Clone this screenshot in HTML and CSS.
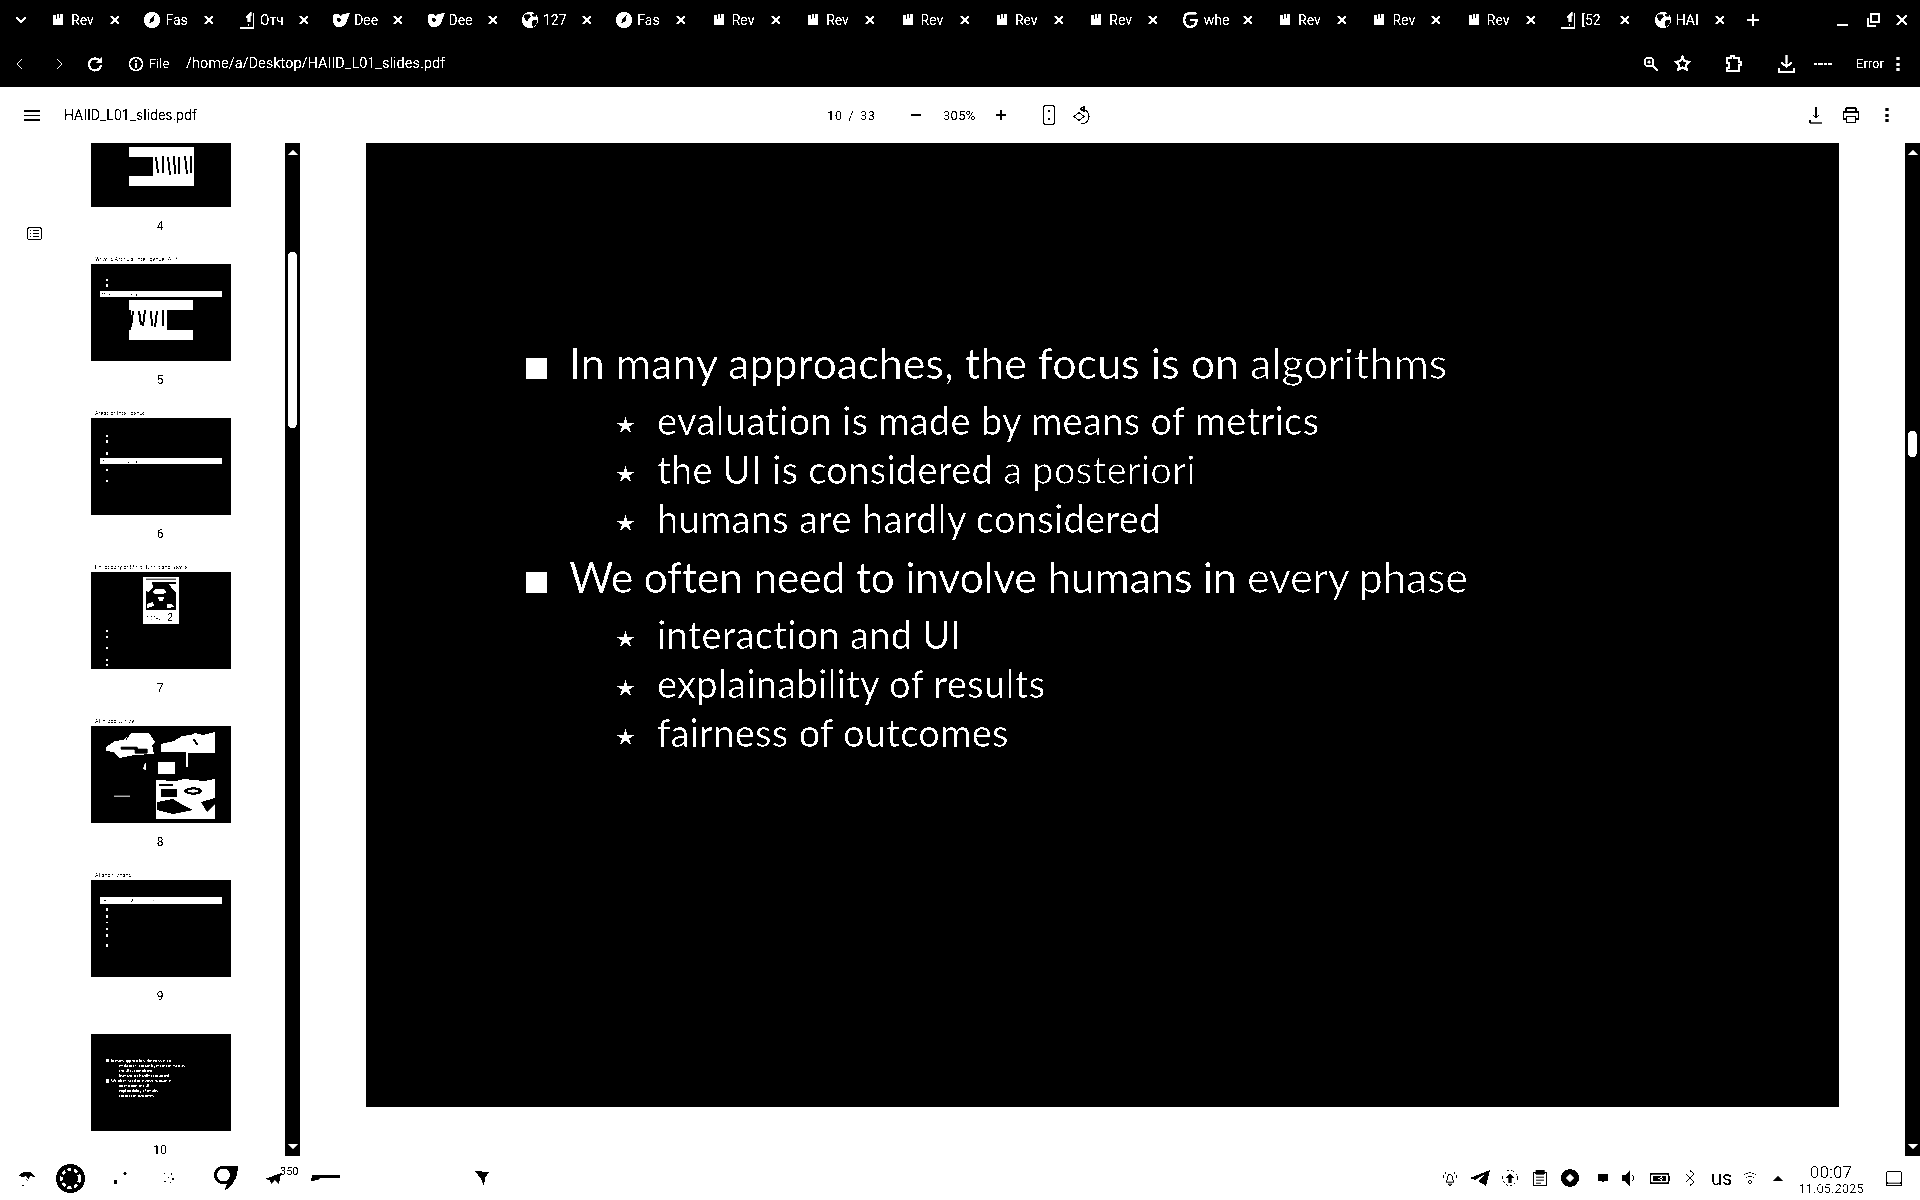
FILE: index.html
```html
<!DOCTYPE html>
<html lang="en">
<head>
    <meta charset="UTF-8">
    <meta name="viewport" content="width=device-width, initial-scale=1.0">
    <title>HAIID_L01_slides.pdf</title>
    <link rel="stylesheet" href="styles.css">
</head>
<body>
<svg class="defs" width="0" height="0">
    <symbol id="i-close" viewBox="0 0 10 10"><path d="M1 1l8 8M9 1l-8 8" stroke="#fff" stroke-width="2.4"/></symbol>
    <symbol id="i-rev" viewBox="-5 -4 22 22"><path d="M0 1h4l1-1h7v13H0z" fill="#fff"/><path d="M3 1h2v5H3zM7 0h1v5H7z" fill="#000"/></symbol>
    <symbol id="i-fast" viewBox="-1 -1 20 20"><circle cx="9" cy="9" r="9" fill="#fff"/><path d="M12 3L7 8l-1 5 5-3z" fill="#000"/></symbol>
    <symbol id="i-doc" viewBox="0 0 15 18"><path d="M0 17h14V2" stroke="#fff" stroke-width="1.3" fill="none"/><path d="M7 5l4-4h1v4h-1v6H8V7H6z" fill="#fff"/><path d="M9 13v2" stroke="#fff"/></symbol>
    <symbol id="i-deep" viewBox="0 0 18 14"><path d="M1 2c3-2 6-1 8 1l2-2 7-1-3 7c-1 4-3 7-7 7H6C2 14 0 7 1 2z" fill="#fff"/><path d="M5 5c2-1 4 1 4 2s-2 3-3 2-2-3-1-4z" fill="#000"/></symbol>
    <symbol id="i-globe" viewBox="-1 -1 20 20"><circle cx="9" cy="9" r="9" fill="#fff"/><path d="M3 3h6l1 3-3 2v3L4 9 2 6zM12 9h5l-1 5-4 3-1-5zM11 2h4l1 3h-4z" fill="#000"/></symbol>
    <symbol id="i-g" viewBox="0 0 16 16"><path d="M13 2H6C3 2 2 5 2 8s1 6 5 6 6-2 6-6H7" stroke="#fff" stroke-width="2" fill="none"/></symbol>
    <symbol id="i-tg" viewBox="0 0 20 16"><path d="M20 0L0 8l5 2 10-6-7 7 8 5z" fill="#000"/></symbol>
    <symbol id="i-star" viewBox="0 0 19 17"><path d="M9.500 0l1.800 7 7.700-.1-6.200 3.700 2.500 6.400-5.800-4.200L3.700 17l2.500-6.400L0 6.900 7.700 7z" fill="#fff"/></symbol>
</svg>

<div class="screen">
    <header class="chrome">
        <div class="tabstrip">
            <svg class="tab-menu" width="12" height="8" viewBox="0 0 12 8"><path d="M1 1l5 5 5-5" stroke="#fff" stroke-width="2" fill="none"/></svg>
            <div class="tab"><svg class="fav"><use href="#i-rev"/></svg><span class="tab-label">Rev</span><svg class="tab-x"><use href="#i-close"/></svg></div>
            <div class="tab"><svg class="fav"><use href="#i-fast"/></svg><span class="tab-label">Fas</span><svg class="tab-x"><use href="#i-close"/></svg></div>
            <div class="tab"><svg class="fav"><use href="#i-doc"/></svg><span class="tab-label">Отч</span><svg class="tab-x"><use href="#i-close"/></svg></div>
            <div class="tab"><svg class="fav"><use href="#i-deep"/></svg><span class="tab-label">Dee</span><svg class="tab-x"><use href="#i-close"/></svg></div>
            <div class="tab"><svg class="fav"><use href="#i-deep"/></svg><span class="tab-label">Dee</span><svg class="tab-x"><use href="#i-close"/></svg></div>
            <div class="tab"><svg class="fav"><use href="#i-globe"/></svg><span class="tab-label">127</span><svg class="tab-x"><use href="#i-close"/></svg></div>
            <div class="tab"><svg class="fav"><use href="#i-fast"/></svg><span class="tab-label">Fas</span><svg class="tab-x"><use href="#i-close"/></svg></div>
            <div class="tab"><svg class="fav"><use href="#i-rev"/></svg><span class="tab-label">Rev</span><svg class="tab-x"><use href="#i-close"/></svg></div>
            <div class="tab"><svg class="fav"><use href="#i-rev"/></svg><span class="tab-label">Rev</span><svg class="tab-x"><use href="#i-close"/></svg></div>
            <div class="tab"><svg class="fav"><use href="#i-rev"/></svg><span class="tab-label">Rev</span><svg class="tab-x"><use href="#i-close"/></svg></div>
            <div class="tab"><svg class="fav"><use href="#i-rev"/></svg><span class="tab-label">Rev</span><svg class="tab-x"><use href="#i-close"/></svg></div>
            <div class="tab"><svg class="fav"><use href="#i-rev"/></svg><span class="tab-label">Rev</span><svg class="tab-x"><use href="#i-close"/></svg></div>
            <div class="tab"><svg class="fav"><use href="#i-g"/></svg><span class="tab-label">whe</span><svg class="tab-x"><use href="#i-close"/></svg></div>
            <div class="tab"><svg class="fav"><use href="#i-rev"/></svg><span class="tab-label">Rev</span><svg class="tab-x"><use href="#i-close"/></svg></div>
            <div class="tab"><svg class="fav"><use href="#i-rev"/></svg><span class="tab-label">Rev</span><svg class="tab-x"><use href="#i-close"/></svg></div>
            <div class="tab"><svg class="fav"><use href="#i-rev"/></svg><span class="tab-label">Rev</span><svg class="tab-x"><use href="#i-close"/></svg></div>
            <div class="tab"><svg class="fav"><use href="#i-doc"/></svg><span class="tab-label">[52</span><svg class="tab-x"><use href="#i-close"/></svg></div>
            <div class="tab"><svg class="fav"><use href="#i-globe"/></svg><span class="tab-label">HAI</span><svg class="tab-x"><use href="#i-close"/></svg></div>
            <svg class="tab-new" width="14" height="14" viewBox="0 0 14 14"><path d="M7 1v12M1 7h12" stroke="#fff" stroke-width="2.4"/></svg>
            <div class="winbtns">
                <svg width="14" height="14" viewBox="0 0 14 14"><path d="M1 12h11" stroke="#fff" stroke-width="2.4"/></svg>
                <svg width="14" height="14" viewBox="0 0 14 14"><path d="M5 1h8v8H5z" fill="none" stroke="#fff" stroke-width="2.4"/><path d="M2 5v8h8" fill="none" stroke="#fff" stroke-width="1.6"/></svg>
                <svg width="14" height="14" viewBox="0 0 14 14"><path d="M2 2l10 10M12 2L2 12" stroke="#fff" stroke-width="2.4"/></svg>
            </div>
        </div>
        <div class="addrbar">
            <svg width="8" height="12" viewBox="0 0 8 12"><path d="M7 1L2 6l5 5" stroke="#fff" stroke-width="1.2" fill="none"/></svg>
            <svg width="8" height="12" viewBox="0 0 8 12"><path d="M1 1l5 5-5 5" stroke="#fff" stroke-width="1.2" fill="none"/></svg>
            <svg width="16" height="16" viewBox="0 0 16 16"><path d="M13 5a6 6 0 1 0 1 4" stroke="#fff" stroke-width="2.2" fill="none"/><path d="M15 1v6H9z" fill="#fff"/></svg>
            <svg width="16" height="16" viewBox="0 0 16 16"><circle cx="8" cy="8" r="6.500" stroke="#fff" stroke-width="1.500" fill="none"/><path d="M8 7v5M8 4v2" stroke="#fff" stroke-width="2"/></svg>
            <span class="addr-file">File</span>
            <span class="addr-url">/home/a/Desktop/HAIID_L01_slides.pdf</span>
            <div class="addr-tools">
                <svg width="16" height="16" viewBox="0 0 16 16"><circle cx="6" cy="6" r="4.500" stroke="#fff" stroke-width="2" fill="none"/><path d="M9 9l6 6" stroke="#fff" stroke-width="1.600"/><path d="M4 6h4M6 4v4" stroke="#fff"/></svg>
                <svg width="17" height="17" viewBox="0 0 17 17"><path d="M8.500 1.500l2 4.700 5 .4-3.800 3.300 1.200 5-4.400-2.700-4.400 2.700 1.200-5L1.500 6.600l5-.4z" fill="none" stroke="#fff" stroke-width="2"/></svg>
                <svg width="18" height="18" viewBox="0 0 18 18"><path d="M3 3h4V1h3v2h5v4h2v3h-2v6H3v-3h2V8H3z" fill="none" stroke="#fff" stroke-width="2"/></svg>
                <svg width="17" height="18" viewBox="0 0 17 18"><path d="M8.500 0v11M3 7l5.500 5L14 7M1 13v4h15v-4" fill="none" stroke="#fff" stroke-width="2"/></svg>
                <svg width="18" height="6" viewBox="0 0 18 6"><path d="M0 3h18" stroke="#fff" stroke-width="2" stroke-dasharray="3 1 5 1"/></svg>
                <span class="addr-error">Error</span>
                <svg width="4" height="16" viewBox="0 0 4 16"><path d="M2 1v3M2 7v3M2 12v3" stroke="#fff" stroke-width="3"/></svg>
            </div>
        </div>
    </header>

    <div class="pdfbar">
        <svg width="16" height="11" viewBox="0 0 16 11"><path d="M0 1h16M0 5.500h16M0 10h16" stroke="#000" stroke-width="1.600"/></svg>
        <span class="pdf-title">HAIID_L01_slides.pdf</span>
        <span class="pdf-pages">10 <i>/</i> 33</span>
        <svg width="12" height="12" viewBox="0 0 12 12"><path d="M1 6h10" stroke="#000" stroke-width="2.200"/></svg>
        <span class="pdf-zoom">305%</span>
        <svg width="12" height="12" viewBox="0 0 12 12"><path d="M1 6h10M6 1v10" stroke="#000" stroke-width="2.200"/></svg>
        <svg width="12" height="20" viewBox="0 0 12 20"><rect x=".8" y=".8" width="10.400" height="18.400" rx="1" fill="none" stroke="#000" stroke-width="1.100"/><path d="M6 5v2M6 13v2" stroke="#000" stroke-width="1.200"/></svg>
        <svg width="18" height="19" viewBox="0 0 18 19"><path d="M9 3a7.500 7.500 0 1 1-1 15" fill="none" stroke="#000" stroke-width="1.200"/><path d="M7 3l4-2.500v5zM1 10.500l5-4 5 4-5 4z" fill="none" stroke="#000" stroke-width="1.100"/></svg>
        <svg width="16" height="17" viewBox="0 0 16 17"><path d="M8 0v11M5 8l3 3 3-3" fill="none" stroke="#000" stroke-width="1.200"/><path d="M2 13v3h12" fill="none" stroke="#000" stroke-width="1.100"/></svg>
        <svg width="18" height="18" viewBox="0 0 18 18"><path d="M4 5V2h10v3M4 13H1.500V6h15v7H14M4.500 10.500h9v6h-9z" fill="none" stroke="#000" stroke-width="1.300"/></svg>
        <svg width="4" height="16" viewBox="0 0 4 16"><path d="M2 1v3M2 7v3M2 12v3" stroke="#000" stroke-width="3"/></svg>
    </div>

    <main class="viewer">
        <aside class="rail">
            <svg width="15" height="13" viewBox="0 0 15 13"><rect x=".6" y=".6" width="13.800" height="11.800" rx="1.500" fill="none" stroke="#000" stroke-width="1.100"/><path d="M3 3.500h1M6 3.500h6M3 6.500h1M6 6.500h6M3 9.500h1M6 9.500h6" stroke="#000" stroke-width="1.100"/></svg>
        </aside>

        <section class="thumbs">
            <div class="thumb thumb-first">
                <svg class="page" viewBox="0 0 140 97">
                    <path d="M38 37h65v39H38V66h24V47H38z" fill="#fff"/>
                    <path d="M65 47l2 16M72 46v17M77 47l2 18M83 46l1 18M88 47v17M94 46l2 18M100 46v17" stroke="#000" stroke-width="2"/>
                </svg>
                <span class="thumb-no">4</span>
            </div>
            <div class="thumb">
                <span class="thumb-title">What is Artificial Intelligence (AI)?</span>
                <svg class="page" viewBox="0 0 140 97">
                    <path d="M16 15v2M16 20v3" stroke="#fff" stroke-width="2"/>
                    <rect x="9" y="27" width="122" height="6" fill="#fff"/>
                    <text class="bar-text" x="11" y="31.500">Machine learning models</text>
                    <path d="M38 36h64v10H76v20h26v10H38V66h2V46h-2z" fill="#fff"/>
                    <path d="M42 47l-2 16M48 47l2 14M54 46l-2 16M60 47l1 15M66 47l-2 16M72 46v16" stroke="#000" stroke-width="2"/>
                </svg>
                <span class="thumb-no">5</span>
            </div>
            <div class="thumb">
                <span class="thumb-title">Areas of Intelligence</span>
                <svg class="page" viewBox="0 0 140 97">
                    <path d="M16 17v2M16 22v3M16 34v3M16 51v2M16 62v2" stroke="#fff" stroke-width="2"/>
                    <rect x="9" y="40" width="122" height="6" fill="#fff"/>
                    <text class="bar-text" x="12" y="44.500">Natural language and vision</text>
                </svg>
                <span class="thumb-no">6</span>
            </div>
            <div class="thumb">
                <span class="thumb-title">Philosophy of Mind: Turing and Searle</span>
                <svg class="page" viewBox="0 0 140 97">
                    <rect x="52" y="5" width="36" height="47" fill="#fff"/>
                    <path d="M55 10h30v28H55z" fill="#000"/>
                    <path d="M55 10h6l1 5-4 5-3-1zM78 12h7v8l-3-2zM64 17h9l3 3-4 2-8 0-2-2zM67 25h6l-1 4h-4zM56 32l6-2 1 4-7 2zM76 32h5l3 3-8 1z" fill="#fff"/>
                    <path d="M55 7h30" stroke="#000"/>
                    <text class="poster-text" x="55" y="48">TOTAL</text>
                    <text class="poster-no" x="76" y="49">2</text>
                    <path d="M16 58v2M16 64v2M16 75v2M16 87v2M16 92v2" stroke="#fff" stroke-width="2"/>
                </svg>
                <span class="thumb-no">7</span>
            </div>
            <div class="thumb">
                <span class="thumb-title">AI in pop culture</span>
                <svg class="page" viewBox="0 0 140 97">
                    <path d="M15 21l9-6 8-1 9-7h17l6 9-3 3 2 9-20 1-14 3-6-6-8-1z" fill="#fff"/>
                    <path d="M30 21h16v2H30zM44 23h12v4H44zM38 9l-3 5" stroke="#000" fill="#000"/>
                    <path d="M70 26V18l13-3 8-5 9-1 4-2 8 2 12-3v21H97v14h-2V26z" fill="#fff"/>
                    <path d="M102 13l5 6" stroke="#000" stroke-width="2"/>
                    <rect x="67" y="36" width="17" height="12" fill="#fff"/>
                    <path d="M52 43l2-6h1v7z" fill="#fff"/>
                    <path d="M23 70h16" stroke="#fff"/>
                    <path d="M65 54l20 1 8-2 20 2 11-2v40H65z" fill="#fff"/>
                    <path d="M68 58h14v2H68zM70 63h16v8H70zM92 65c6-5 16-5 20 0-4 5-14 5-20 0zM96 55v6M66 76l16-3 10 6 10 5-20 4-16-4zM110 76l14-4v6l-8 8z" fill="#000"/>
                    <path d="M96 65c4-2 10-2 12 0-3 2-9 2-12 0z" fill="#fff"/>
                </svg>
                <span class="thumb-no">8</span>
            </div>
            <div class="thumb">
                <span class="thumb-title">AI and humans</span>
                <svg class="page" viewBox="0 0 140 97">
                    <rect x="9" y="17" width="122" height="7" fill="#fff"/>
                    <text class="bar-text" x="13" y="22">Human centered AI is a new idea</text>
                    <path d="M16 28v3M16 35v3M16 42v1M16 48v2M16 54v3M16 64v3" stroke="#fff" stroke-width="2"/>
                </svg>
                <span class="thumb-no">9</span>
            </div>
            <div class="thumb">
                <svg class="page" viewBox="0 0 140 97">
                    <path d="M15 25h3v3h-3zM15 45h3v4h-3z" fill="#fff"/>
                    <text class="mini-text" x="20" y="28">In many approaches, the focus is on <tspan class="mini-dim">algorithms</tspan></text>
                    <text class="mini-text" x="28" y="33">evaluation is made by means of metrics</text>
                    <text class="mini-text" x="28" y="38">the UI is considered <tspan class="mini-dim">a posteriori</tspan></text>
                    <text class="mini-text" x="28" y="43">humans are hardly considered</text>
                    <text class="mini-text" x="20" y="48">We often need to involve humans in <tspan class="mini-dim">every phase</tspan></text>
                    <text class="mini-text" x="28" y="53">interaction and UI</text>
                    <text class="mini-text" x="28" y="58">explainability of results</text>
                    <text class="mini-text" x="28" y="63">fairness of outcomes</text>
                </svg>
                <span class="thumb-no">10</span>
            </div>
        </section>

        <div class="sbar sbar-side">
            <span class="sbar-up"></span>
            <span class="sbar-thumb"></span>
            <span class="sbar-down"></span>
        </div>

        <section class="pages">
            <article class="slide">
                <p class="point"><span class="square"></span>In many approaches, the focus is on <span class="em">algorithms</span></p>
                <p class="subpoint"><svg class="star"><use href="#i-star"/></svg>evaluation is made by means of metrics</p>
                <p class="subpoint"><svg class="star"><use href="#i-star"/></svg>the UI is considered <span class="em">a posteriori</span></p>
                <p class="subpoint"><svg class="star"><use href="#i-star"/></svg>humans are hardly considered</p>
                <p class="point point-next"><span class="square"></span>We often need to involve humans in <span class="em">every phase</span></p>
                <p class="subpoint"><svg class="star"><use href="#i-star"/></svg>interaction and UI</p>
                <p class="subpoint"><svg class="star"><use href="#i-star"/></svg>explainability of results</p>
                <p class="subpoint"><svg class="star"><use href="#i-star"/></svg>fairness of outcomes</p>
            </article>
        </section>

        <div class="sbar sbar-main">
            <span class="sbar-up"></span>
            <span class="sbar-thumb"></span>
            <span class="sbar-down"></span>
        </div>
    </main>

    <footer class="taskbar">
        <div class="task-left">
            <svg width="18" height="18" viewBox="0 0 18 18"><path d="M1 7c3-5 9-6 14-2l2 3-5-1-1 3-3-3-3 1zM9 10l1 2-2-1zM4 16h2v1H4z" fill="#000"/></svg>
            <svg width="29" height="29" viewBox="0 0 29 29"><circle cx="14.500" cy="14.500" r="14.500" fill="#000"/><circle cx="14.500" cy="14.500" r="9" fill="none" stroke="#fff" stroke-width="3" stroke-dasharray="4 2.500"/></svg>
            <svg width="14" height="14" viewBox="0 0 14 14"><circle cx="2.500" cy="11" r="2" fill="#000"/><circle cx="12" cy="2.500" r="1.500" fill="#000"/></svg>
            <svg width="12" height="12" viewBox="0 0 12 12"><path d="M1 1h1v1H1zM8 1h1v2H8zM5 5h1v1H5zM9 6h2v2H9zM1 9h2v1H1zM7 10h1v1H7z" fill="#000"/></svg>
            <svg width="24" height="25" viewBox="0 0 24 25"><path d="M10 0h14c0 12-6 21-14 25l3-7C5 19 0 15 0 9s4-9 10-9z" fill="#000"/><circle cx="9.500" cy="9" r="6.500" fill="#fff"/></svg>
            <div class="tg-count">
                <svg width="16" height="11" viewBox="0 0 16 11"><path d="M16 0L0 6l5 1 1 4 4-4 4 4z" fill="#000"/></svg>
                <span class="badge">350</span>
            </div>
            <svg width="29" height="7" viewBox="0 0 29 7"><path d="M1 0h28v3H9L7 5 0 6z" fill="#000"/></svg>
            <svg width="14" height="15" viewBox="0 0 14 15"><path d="M0 0l14 1-4 6-1 8-3-7z" fill="#000"/></svg>
        </div>
        <div class="task-right">
            <svg width="16" height="16" viewBox="0 0 16 16"><path d="M4 12c2-2 1-8 4-8s2 6 4 8zM6 14h4l-2 2zM2 5l-1 3M14 5l1 3M4 2L3 4M12 2l1 2" fill="none" stroke="#000"/></svg>
            <svg width="20" height="16" viewBox="0 0 20 16"><use href="#i-tg"/></svg>
            <svg width="16" height="16" viewBox="0 0 16 16"><circle cx="8" cy="8" r="7.500" fill="none" stroke="#000" stroke-dasharray="3 1.500"/><path d="M8 3l4 5H9.500v5h-3V8H4z" fill="#000"/></svg>
            <svg width="14" height="16" viewBox="0 0 14 16"><path d="M.7 2.700h12.600v12.600H.7z" fill="none" stroke="#000" stroke-width="1.200"/><path d="M3 0h8v4H3zM3 7h8M3 10h8M3 13h5" fill="#000" stroke="#000"/></svg>
            <svg width="18" height="18" viewBox="0 0 18 18"><circle cx="9" cy="9" r="9" fill="#000"/><path d="M9 5l4 4-4 4-4-4z" fill="#fff"/></svg>
            <svg width="10" height="9" viewBox="0 0 10 9"><path d="M0 0h10v7H6L5 9 4 7H0z" fill="#000"/></svg>
            <svg width="13" height="16" viewBox="0 0 13 16"><path d="M0 5h3l5-5v16l-5-5H0z" fill="#000"/><path d="M10 5c2 1 2 5 0 6" fill="none" stroke="#000"/></svg>
            <svg width="20" height="11" viewBox="0 0 20 11"><path d="M.7.700h17.600v9.600H.7z" fill="none" stroke="#000" stroke-width="1.400"/><path d="M3 3h13v5H3zM19 3h1v5h-1z" fill="#000"/><path d="M12 3L8 5.500 12 8zM10 5h3v1h-3z" fill="#fff"/></svg>
            <svg width="10" height="16" viewBox="0 0 10 16"><path d="M1 4l8 8-4 3.500V.500L9 4l-8 8" fill="none" stroke="#000" stroke-width=".8"/></svg>
            <span class="lang">us</span>
            <svg width="14" height="12" viewBox="0 0 14 12"><path d="M1 3c3-3 9-3 12 0M3 6c2-2 6-2 8 0" fill="none" stroke="#000" stroke-width=".9"/><circle cx="7" cy="10" r="1.500" fill="none" stroke="#000" stroke-width=".9"/></svg>
            <svg width="10" height="5" viewBox="0 0 10 5"><path d="M5 0l5 5H0z" fill="#000"/></svg>
            <div class="clock"><span class="clock-time">00:07</span><span class="clock-date">11.05.2025</span></div>
            <svg width="16" height="15" viewBox="0 0 16 15"><rect x=".6" y=".6" width="14.800" height="13.800" rx="1" fill="none" stroke="#000" stroke-width="1.100"/><path d="M1 12h14" stroke="#000" stroke-width="1"/></svg>
        </div>
    </footer>
</div>
</body>
</html>
```

FILE: styles.css
```css
* {box-sizing: border-box;}
html, body {margin: 0; background: #fff;}
body {font-family: Roboto, "Liberation Sans", sans-serif; color: #000;}
svg {display: block; flex: none;}
.defs {position: absolute;}

/* whole screen is 1-bit, so everything goes through a hard threshold */
.screen {
    width: 1920px; height: 1200px; overflow: hidden;
    display: flex; flex-direction: column;
    background: #fff;
    filter: grayscale(1) contrast(100);
}

/* browser frame */
.chrome {height: 87px; background: #000; color: #fff; flex: none;}
.tabstrip {height: 40px; display: flex; align-items: center; padding-left: 15px;}
.tab-menu {margin-right: 22px;}
.tab {width: 94.4px; flex: none; display: flex; align-items: center;}
.fav {width: 18px; height: 18px; margin-right: 4px; flex: none;}
.tab-label {width: 25px; white-space: nowrap; font-size: 14px; flex: none;}
.tab-x {width: 10px; height: 10px; margin-left: 14px; flex: none;}
.tab-new {margin-left: -2px;}
.winbtns {margin-left: auto; width: 84px; padding-right: 11px; display: flex; justify-content: space-between;}

.addrbar {height: 47px; display: grid; grid-template-columns: 41px 31px 41px 21px 37px 1fr auto; align-items: center; padding: 0 20px 0 15px;}
.addr-file {font-size: 13px;}
.addr-url {font-size: 14.5px;}
.addr-tools {display: grid; grid-template-columns: 31px 50px 54px 36px 42px 40px 4px; align-items: center;}
.addr-error {font-size: 13px;}

/* pdf viewer toolbar */
.pdfbar {
    height: 56px; flex: none;
    display: grid; grid-template-columns: 40px 763px 83px 33px 52px 48px 30px 735px 34px 43px 4px;
    align-items: center; padding-left: 24px;
    font-size: 14px;
}
.pdf-pages {font-size: 13px; letter-spacing: .5px; word-spacing: 2px;}
.pdf-pages i {font-style: normal;}
.pdf-zoom {font-size: 13px; letter-spacing: .3px;}

.viewer {flex: 1; display: flex; min-height: 0;}
.rail {width: 91px; flex: none; padding: 84px 0 0 27px;}

.thumbs {width: 194px; flex: none; overflow: hidden;}
.thumb {width: 140px; height: 154px; position: relative;}
.thumb-first {margin-top: -33px;}
.page {width: 140px; height: 97px; background: #000;}
.thumb-no {display: block; text-align: center; font-size: 12px; line-height: 14px; margin-top: 12px; width: 138px;}
.thumb-title {position: absolute; left: 4px; top: -8px; font-size: 5.5px; line-height: 7px; white-space: nowrap;}
.bar-text {font-size: 3.6px; fill: #000; font-family: "Liberation Sans", sans-serif;}
.mini-text {font-size: 3.8px; font-weight: 700; fill: #fff; font-family: Lato, sans-serif;}
.mini-dim {fill: #000;}
.poster-text {font-size: 5px; fill: #000; font-family: "Liberation Sans", sans-serif;}
.poster-no {font-size: 11px; fill: #000; font-family: "Liberation Sans", sans-serif;}

.sbar {width: 15px; flex: none; background: #000; display: flex; flex-direction: column; align-items: center;}
.sbar-up, .sbar-down {width: 0; height: 0; border: 5px solid transparent; border-top: 0; border-bottom: 5px solid #fff; margin-top: 7px;}
.sbar-down {border-bottom: 0; border-top: 5px solid #fff; margin: auto 0 7px;}
.sbar-thumb {width: 9px; border-radius: 5px; background: #fff;}
.sbar-side .sbar-thumb {height: 176px; margin-top: 97px;}
.sbar-main .sbar-thumb {height: 26px; margin-top: 276px;}

/* slide */
.pages {flex: 1; padding: 0 66px 49px;}
.slide {
    height: 100%; background: #000; color: #a8a8a8;
    font-family: Lato, "Liberation Sans", sans-serif;
    padding-top: 192px;
}
.slide p {margin: 0; display: flex; align-items: baseline; white-space: pre;}
.point {font-size: 43px; line-height: 56px; padding-left: 160px; margin-bottom: 5px !important;}
.point-next {margin-top: 6px !important; letter-spacing: -.4px;}
.subpoint {font-size: 38px; line-height: 49px; padding-left: 250px; letter-spacing: .3px;}
.square {width: 21px; height: 21px; background: #fff; margin-right: 22px; flex: none;}
.star {width: 19px; height: 17px; margin: 20px 22px 0 0; align-self: flex-start; flex: none;}
.em {color: #868686;}

/* task bar */
.taskbar {height: 44px; flex: none; display: flex; align-items: center; justify-content: space-between; font-size: 11px;}
.task-left {display: grid; grid-template-columns: 38px 57px 50px 51px 51px 46px 164px auto; align-items: center; padding-left: 18px;}
.tg-count {display: flex; align-items: flex-start;}
.badge {font-size: 11px; line-height: 11px; margin: -7px 0 0 -1px;}
.task-right {display: grid; grid-template-columns: 28px 32px 31px 28px 37px 24px 28px 35px 26px 32px 30px 26px 87px 16px; align-items: center; padding-right: 18px;}
.lang {font-size: 20px; line-height: 20px;}
.clock {display: flex; flex-direction: column; align-items: center; width: 64px; line-height: 1; padding-top: 2px;}
.clock-time {font-size: 17px; color: #444;}
.clock-date {font-size: 13px; color: #444; margin-top: 1px;}
```
